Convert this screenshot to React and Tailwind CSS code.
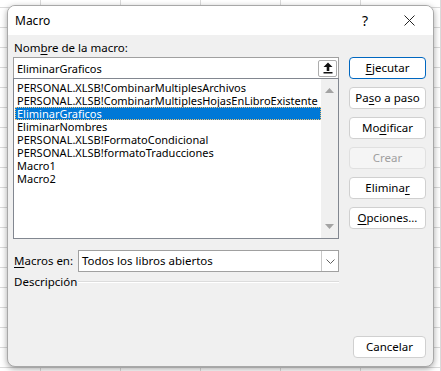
import React from "react";

const items = [
  "PERSONAL.XLSB!CombinarMultiplesArchivos",
  "PERSONAL.XLSB!CombinarMultiplesHojasEnLibroExistente",
  "EliminarGraficos",
  "EliminarNombres",
  "PERSONAL.XLSB!FormatoCondicional",
  "PERSONAL.XLSB!formatoTraducciones",
  "Macro1",
  "Macro2",
];

function Btn({ children, primary, disabled, className = "" }) {
  const border = primary
    ? "border-[#0067c0]"
    : disabled
      ? "border-[#e0e0e0]"
      : "border-[#d0d0d0]";
  return (
    <button
      className={`flex h-[22px] items-center justify-center rounded-[4px] border ${border} ${
        disabled ? "bg-[#f5f5f5] text-[#a0a0a0]" : "bg-white text-black"
      } text-[11.5px] leading-none ${className}`}
    >
      {children}
    </button>
  );
}

export default function App() {
  return (
    <div className="h-[371px] w-[441px] overflow-hidden bg-white bg-[linear-gradient(to_right,#dadada_1px,transparent_1px),linear-gradient(to_bottom,#dadada_1px,transparent_1px)] bg-[length:80px_20px] bg-[position:40px_7px] pl-[7px] pt-[5px] font-['Segoe_UI','Noto_Sans',sans-serif] text-black">
      <div className="flex h-[362px] w-[427px] flex-col overflow-hidden rounded-lg border border-[#a8a8a8] bg-[#f0f0f0] shadow-[0_2px_6px_rgba(0,0,0,0.35)]">
        {/* title bar */}
        <div className="flex h-[29px] shrink-0 items-center bg-white pl-[7px] text-[12px]">
          <span className="pt-[1px]">Macro</span>
          <span className="ml-auto mr-[36px] text-[14px] leading-none">?</span>
          <svg width="11" height="11" viewBox="0 0 11 11" className="mr-[18px]">
            <path d="M0.5 0.5 L10.5 10.5 M10.5 0.5 L0.5 10.5" stroke="#222" strokeWidth="1" />
          </svg>
        </div>

        {/* body */}
        <div className="flex flex-1 gap-[10px] pl-[5px] text-[11px]">
          {/* left column */}
          <div className="flex w-[326px] flex-col">
            <div className="mt-[5px] h-[16px] pl-[1px] text-[11.5px] leading-[16px]">
              Nom<u className="underline-offset-2">b</u>re de la macro:
            </div>
            <div className="mt-[1px] flex h-[21px] items-center border border-b-0 border-[#a0a0a0] bg-white pl-[3px] pr-[1px]">
              <span className="leading-none">EliminarGraficos</span>
              <div className="ml-auto flex h-[17px] w-[19px] items-center justify-center rounded-[2px] border border-[#adadad] bg-white">
                <svg width="10" height="12" viewBox="0 0 10 12">
                  <path d="M5 0.5 L9.5 5 L6.3 5 L6.3 9 L3.7 9 L3.7 5 L0.5 5 Z" fill="#111" />
                  <rect x="0.5" y="10" width="9" height="1.5" fill="#111" />
                </svg>
              </div>
            </div>
            <div className="flex h-[161px] border border-[#828790] bg-white">
              <div className="flex flex-1 flex-col pl-[1px] pt-[2px]">
                {items.map((t, i) =>
                  i === 2 ? (
                    <div
                      key={t}
                      className="h-[13px] border border-dotted border-[#f0c070] bg-[#0078d7] pl-[1px] leading-[11px] text-white"
                    >
                      {t}
                    </div>
                  ) : (
                    <div key={t} className="h-[13px] pl-[2px] leading-[13px] whitespace-nowrap">
                      {t}
                    </div>
                  ),
                )}
              </div>
              <div className="flex w-[17px] flex-col items-center justify-between bg-[#f0f0f0] py-[9px]">
                <svg width="9" height="5" viewBox="0 0 9 5">
                  <path d="M4.5 0 L9 5 L0 5 Z" fill="#a3a3a3" />
                </svg>
                <svg width="9" height="5" viewBox="0 0 9 5">
                  <path d="M0 0 L9 0 L4.5 5 Z" fill="#a3a3a3" />
                </svg>
              </div>
            </div>

            <div className="mt-[11px] flex h-[22px] items-center text-[11.5px]">
              <div className="w-[65px] pl-[1px]">
                <u className="underline-offset-2">M</u>acros en:
              </div>
              <div className="flex h-[22px] flex-1 items-center border border-[#a0a0a0] bg-white pl-[3px]">
                <span>Todos los libros abiertos</span>
                <div className="ml-auto flex h-[20px] w-[17px] items-center justify-center border-l border-[#c8c8c8]">
                  <svg width="9" height="5" viewBox="0 0 9 5">
                    <path d="M0.5 0.5 L4.5 4.5 L8.5 0.5" stroke="#606060" fill="none" strokeWidth="1" />
                  </svg>
                </div>
              </div>
            </div>

            <div className="mt-[2px] flex h-[16px] items-center text-[11.5px]">
              <div className="w-[65px] pl-[1px]">Descripción</div>
              <div className="h-0 flex-1 border-t border-b border-t-[#dcdcdc] border-b-white" />
            </div>
          </div>

          {/* right column */}
          <div className="flex flex-1 flex-col pr-[7px]">
            <div className="mt-[22px] flex flex-col gap-[8px]">
              <Btn primary>
                <u className="underline-offset-2">E</u>jecutar
              </Btn>
              <Btn>
                Pa<u className="underline-offset-2">s</u>o a paso
              </Btn>
              <Btn>
                Mo<u className="underline-offset-2">d</u>ificar
              </Btn>
              <Btn disabled>Crear</Btn>
              <Btn>
                Elimina<u className="underline-offset-2">r</u>
              </Btn>
              <Btn>
                <u className="underline-offset-2">O</u>pciones...
              </Btn>
            </div>
            <div className="mt-auto mb-[8px] flex justify-end">
              <Btn className="w-[73px]">Cancelar</Btn>
            </div>
          </div>
        </div>
      </div>
    </div>
  );
}
